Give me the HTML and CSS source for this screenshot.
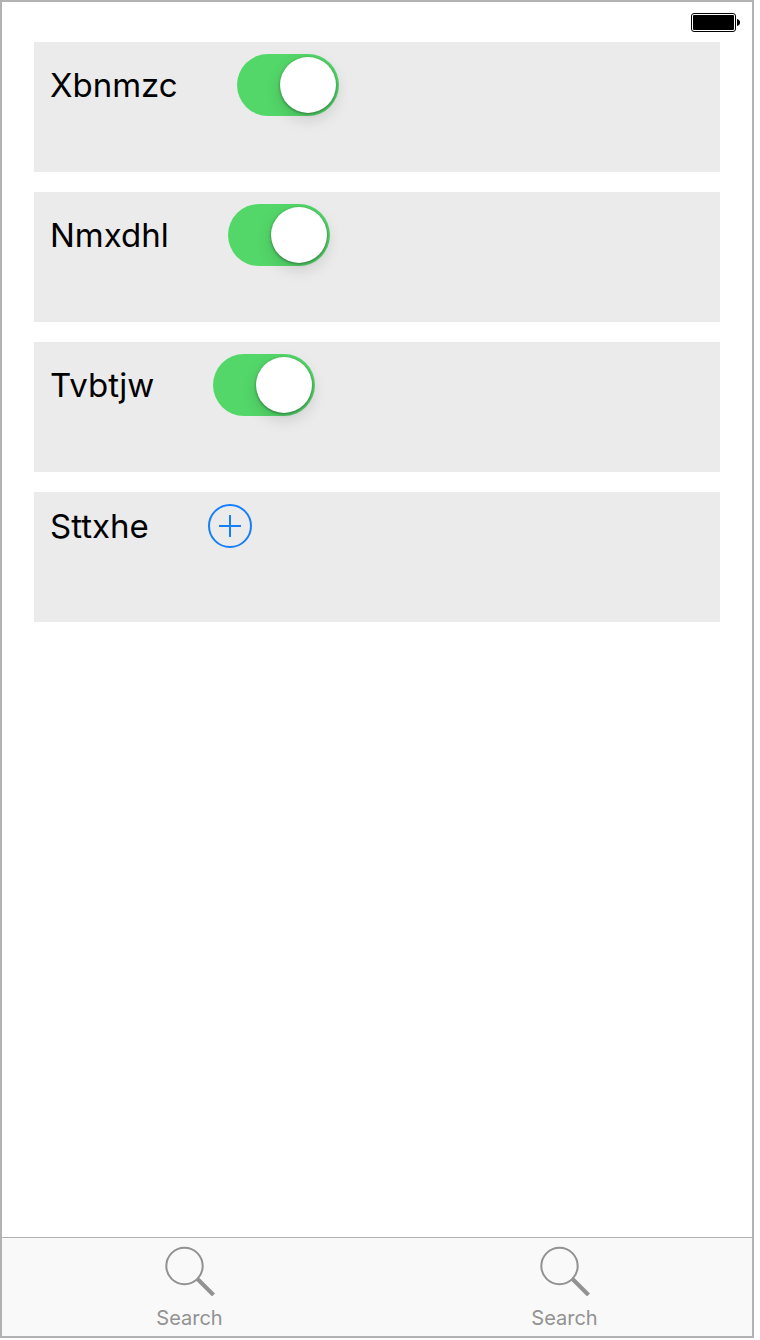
FILE: index.html
```html
<!DOCTYPE html>
<html lang="en">
<head>
<meta charset="utf-8">
<meta name="viewport" content="width=device-width, initial-scale=1">
<title>Settings</title>
<link rel="stylesheet" href="styles.css">
</head>
<body>
<div class="screen">
  <header class="status">
    <svg class="battery" width="50" height="20" viewBox="0 0 50 20" aria-hidden="true">
      <rect x="0.5" y="0.5" width="44" height="18" rx="2.5" fill="#fff" stroke="#000"/>
      <rect x="2" y="2" width="41" height="15" rx="1"/>
      <path d="M46 6c2 .3 3 1.600 3 3.500s-1 3.200-3 3.500z"/>
    </svg>
  </header>
  <main class="list">
    <div class="card">
      <label class="name" for="s1">Xbnmzc</label>
      <input class="switch" id="s1" type="checkbox" role="switch" checked>
    </div>
    <div class="card">
      <label class="name" for="s2">Nmxdhl</label>
      <input class="switch" id="s2" type="checkbox" role="switch" checked>
    </div>
    <div class="card">
      <label class="name" for="s3">Tvbtjw</label>
      <input class="switch" id="s3" type="checkbox" role="switch" checked>
    </div>
    <div class="card">
      <label class="name" for="add">Sttxhe</label>
      <button class="add" id="add" type="button">
        <svg width="44" height="44" viewBox="0 0 44 44" fill="none" stroke="#157efb" stroke-width="2" aria-hidden="true">
          <circle cx="22" cy="22" r="21"/>
          <path d="M11 22h22M22 11v22"/>
        </svg>
      </button>
    </div>
  </main>
  <nav class="tabs">
    <a class="tab" href="#search-one">
      <svg width="50" height="50" viewBox="0 0 50 50" fill="none" stroke="#929292" aria-hidden="true">
        <circle cx="19.500" cy="20" r="18.200" stroke-width="2"/>
        <path d="M32 32.500L48.500 49" stroke-width="4"/>
      </svg>
      Search
    </a>
    <a class="tab" href="#search-two">
      <svg width="50" height="50" viewBox="0 0 50 50" fill="none" stroke="#929292" aria-hidden="true">
        <circle cx="19.500" cy="20" r="18.200" stroke-width="2"/>
        <path d="M32 32.500L48.500 49" stroke-width="4"/>
      </svg>
      Search
    </a>
  </nav>
</div>
</body>
</html>
```
FILE: styles.css
```css
* {
  box-sizing: border-box;
}

body {
  margin: 0;
  background: #fff;
  font-family: Inter, "Liberation Sans", sans-serif;
}

.screen {
  display: flex;
  flex-direction: column;
  min-height: calc(100vh - 2px);
  margin: 0 6px 2px 0;
  border: 2px solid #b2b2b2;
}

.status {
  display: flex;
  justify-content: flex-end;
  height: 40px;
  padding: 11px 11px 0;
}

.list {
  display: flex;
  flex: 1;
  flex-direction: column;
  gap: 20px;
  padding: 0 32px 20px;
}

.card {
  display: flex;
  align-items: center;
  gap: 59px;
  padding: 12px 16px 56px;
  background: #ebebeb;
}

.card:last-child {
  padding-bottom: 74px;
}

.name {
  color: #000;
  font-size: 33px;
  line-height: 40px;
}

.switch {
  display: flex;
  justify-content: flex-end;
  width: 102px;
  height: 62px;
  margin: 0;
  padding: 3px;
  appearance: none;
  border-radius: 31px;
  background: #53d769;
}

.switch::before {
  content: "";
  width: 56px;
  height: 56px;
  border-radius: 50%;
  background: #fff;
  box-shadow: 0 1px 3px rgba(0, 0, 0, 0.4), 0 6px 16px rgba(0, 0, 0, 0.15);
}

.switch:not(:checked) {
  justify-content: flex-start;
  background: #d5d5d5;
}

.add {
  width: 44px;
  height: 44px;
  padding: 0;
  border: 0;
  background: none;
}

.add svg {
  display: block;
}

.tabs {
  display: flex;
  border-top: 1px solid #b2b2b2;
  background: #f9f9f9;
}

.tab {
  display: flex;
  flex: 1;
  flex-direction: column;
  align-items: center;
  gap: 9px;
  padding: 8px 0 5px;
  color: #929292;
  font-size: 20px;
  line-height: 26px;
  text-decoration: none;
}
```
